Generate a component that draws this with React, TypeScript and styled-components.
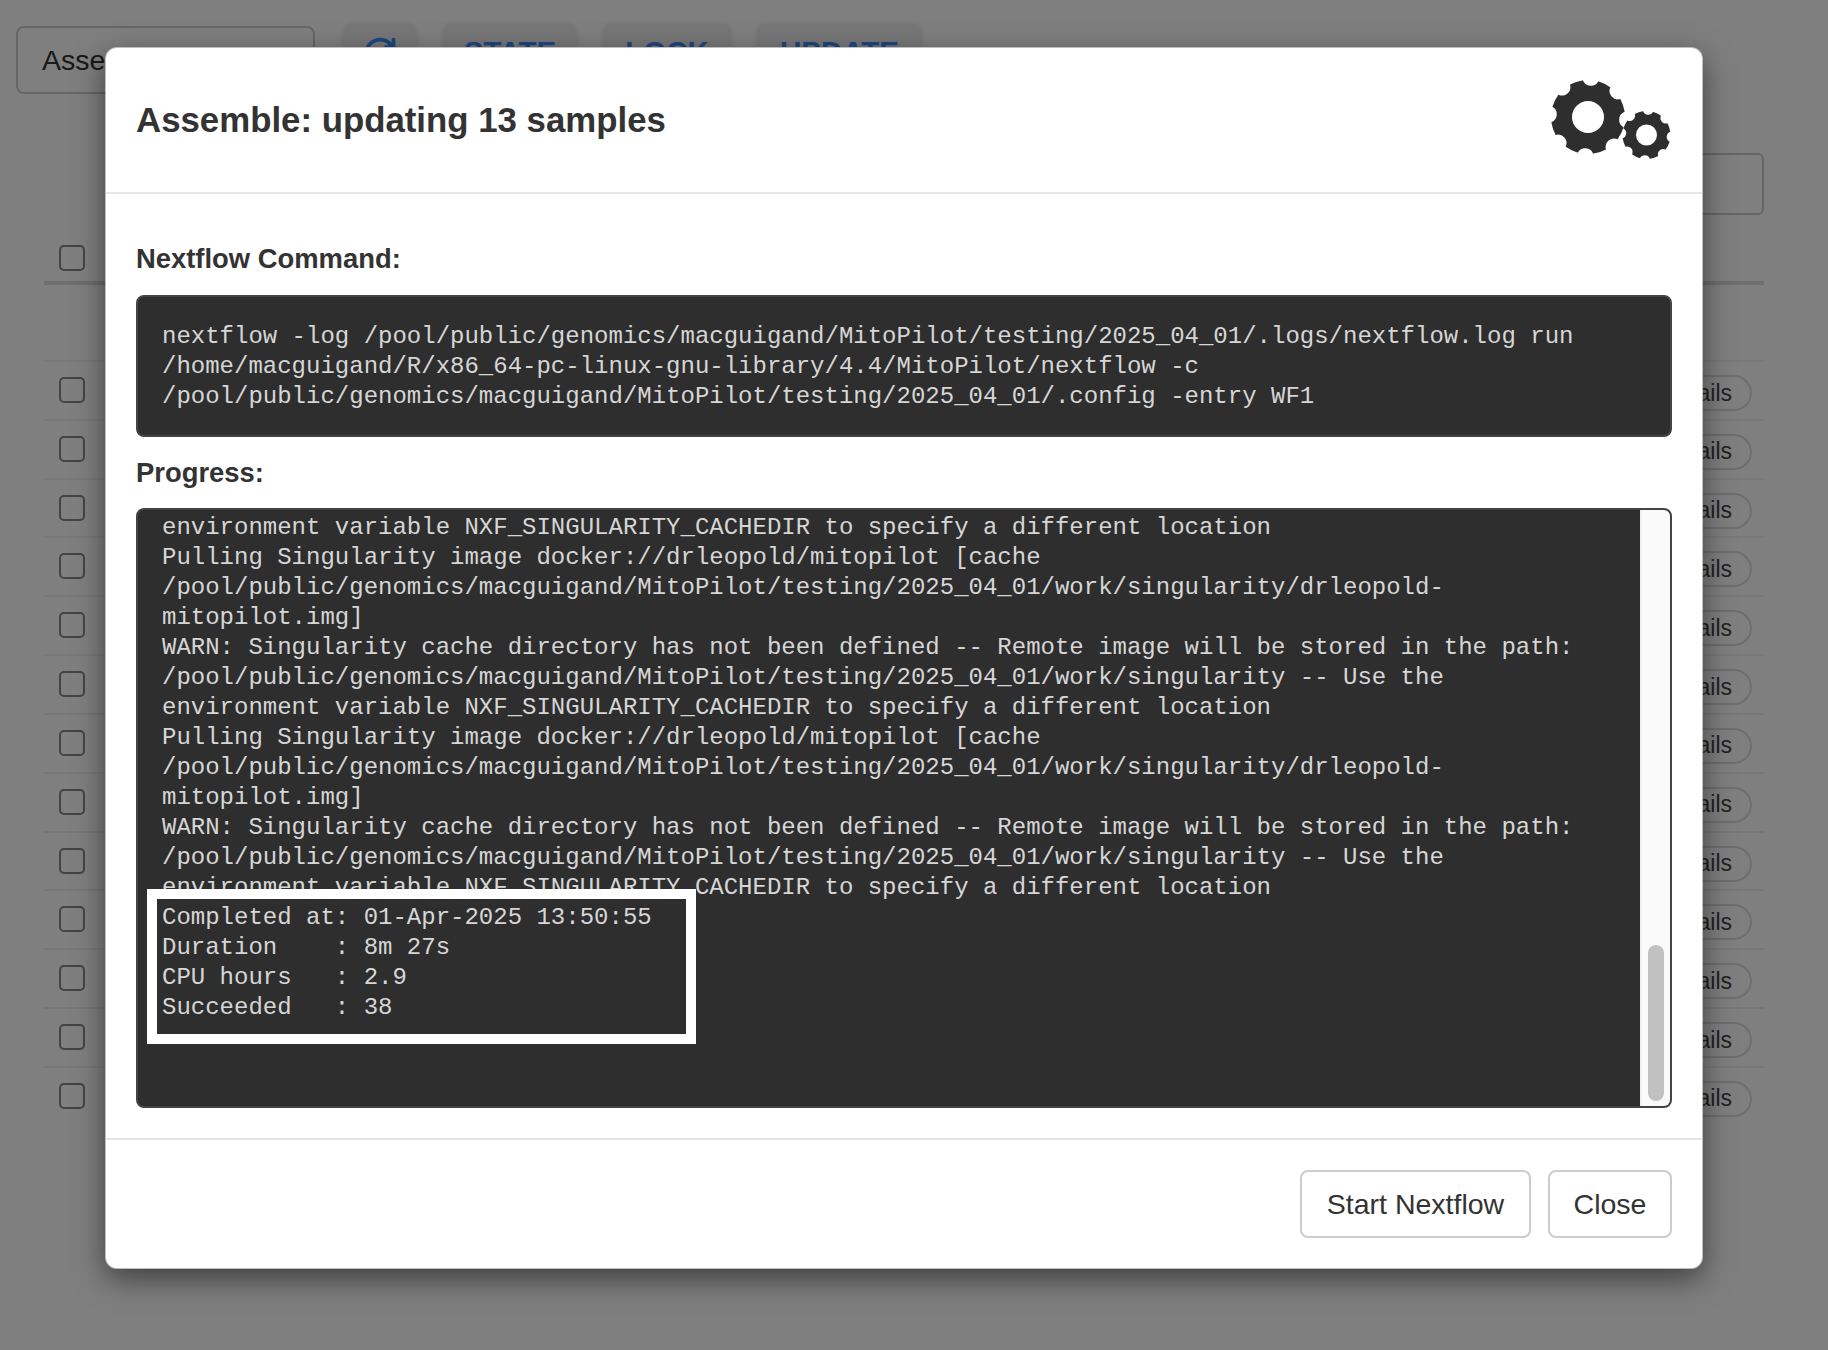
import React from "react";
import styled, { createGlobalStyle } from "styled-components";
import { RotateCw } from "lucide-react";

const Global = createGlobalStyle`
  html, body { margin: 0; padding: 0; background: #fff; }
  body { font-family: "Liberation Sans", Arial, sans-serif; color: #333; }
  #root { width: 1828px; height: 1350px; overflow: hidden; }
`;

const Page = styled.div`
  position: relative;
  width: 1828px;
  height: 1350px;
  overflow: hidden;
`;

const Toolbar = styled.div`
  display: flex;
  align-items: flex-start;
  padding: 24px 0 0 16px;
  height: 70px;
  box-sizing: border-box;
`;

const Select = styled.div`
  width: 299px;
  height: 68px;
  margin-top: 2px;
  padding-left: 24px;
  box-sizing: border-box;
  display: flex;
  align-items: center;
  border: 2px solid #ccc;
  border-radius: 8px;
  font-size: 28.5px;
  color: #333;
`;

const ToolButton = styled.div<{ $width: number; $gap: number }>`
  width: ${(p) => p.$width}px;
  height: 68px;
  margin-left: ${(p) => p.$gap}px;
  display: flex;
  justify-content: center;
  align-items: flex-start;
  padding-top: 11px;
  box-sizing: border-box;
  background: #eee;
  border-radius: 6px;
  box-shadow: 0 1px 6px rgba(0, 0, 0, 0.12);
  color: #3c8cff;
  font-size: 29.5px;
  font-weight: 700;
`;

const SearchRow = styled.div`
  display: flex;
  justify-content: flex-end;
  padding: 83px 64px 0 0;
`;

const Search = styled.div`
  width: 400px;
  height: 62px;
  box-sizing: border-box;
  border: 2px solid #ccc;
  border-radius: 6px;
`;

const Table = styled.div`
  width: 1720px;
  margin: 0 0 0 44px;
`;

const HeaderRow = styled.div`
  display: flex;
  box-sizing: border-box;
  height: 70px;
  padding: 28px 0 0 15px;
  border-bottom: 4px solid #ddd;
  margin-bottom: 75px;
`;

const Row = styled.div`
  height: 58.83px;
  box-sizing: border-box;
  display: flex;
  justify-content: space-between;
  padding: 13px 12px 0 15px;
  border-top: 2px solid #eee;
`;

const Check = styled.div`
  width: 26px;
  height: 26px;
  margin-top: 2px;
  box-sizing: border-box;
  border: 2px solid #888;
  border-radius: 5px;
`;

const Pill = styled.div`
  height: 36px;
  box-sizing: border-box;
  padding: 0 18px;
  display: flex;
  align-items: center;
  border: 2px solid #ddd;
  border-radius: 18px;
  font-size: 23px;
  color: #444;
`;

const Backdrop = styled.div`
  position: absolute;
  inset: 0;
  background: rgba(0, 0, 0, 0.5);
`;

const Modal = styled.div`
  position: absolute;
  left: 105px;
  top: 47px;
  width: 1598px;
  height: 1222px;
  box-sizing: border-box;
  display: flex;
  flex-direction: column;
  background: #fff;
  border: 1px solid rgba(0, 0, 0, 0.25);
  border-radius: 12px;
  box-shadow: 0 10px 30px rgba(0, 0, 0, 0.5);
`;

const ModalHeader = styled.div`
  height: 146px;
  box-sizing: border-box;
  display: flex;
  align-items: center;
  justify-content: space-between;
  padding: 0 30px;
  border-bottom: 2px solid #e5e5e5;
`;

const Title = styled.h4`
  margin: 0;
  font-size: 34.8px;
  font-weight: 700;
  color: #333;
`;

const ModalBody = styled.div`
  flex: 1;
  padding: 47px 30px 0;
`;

const Label = styled.div<{ $top?: number }>`
  height: 36px;
  line-height: 36px;
  margin-top: ${(p) => p.$top ?? 0}px;
  margin-bottom: ${(p) => (p.$top ? 17 : 18)}px;
  font-size: 27.4px;
  font-weight: 700;
  color: #333;
`;

const Console = styled.pre`
  margin: 0;
  box-sizing: border-box;
  height: 142px;
  padding: 25px 24px 19px;
  background: #2e2e2e;
  border: 2px solid #444;
  border-radius: 8px;
  color: #d6d6d6;
  font: 24px/30px "Liberation Mono", "Courier New", monospace;
`;

const LogBox = styled.div`
  position: relative;
  display: flex;
  height: 600px;
  box-sizing: border-box;
  background: #2e2e2e;
  border: 2px solid #444;
  border-radius: 8px;
  overflow: hidden;
`;

const LogText = styled.pre`
  flex: 1;
  margin: 0;
  padding: 3px 24px 0;
  overflow: hidden;
  color: #d6d6d6;
  font: 24px/30px "Liberation Mono", "Courier New", monospace;
`;

const Highlight = styled.div`
  position: absolute;
  left: 9px;
  top: 379px;
  width: 549px;
  height: 155px;
  box-sizing: border-box;
  border: 10px solid #fff;
`;

const ScrollTrack = styled.div`
  width: 30px;
  box-sizing: border-box;
  display: flex;
  flex-direction: column;
  justify-content: flex-end;
  align-items: center;
  padding-bottom: 5px;
  background: #fafafa;
  border-left: 2px solid #f0f0f0;
`;

const ScrollThumb = styled.div`
  width: 16px;
  height: 156px;
  background: #c1c1c1;
  border-radius: 8px;
`;

const ModalFooter = styled.div`
  height: 130px;
  box-sizing: border-box;
  display: flex;
  justify-content: flex-end;
  gap: 17px;
  padding: 30px 30px 0 0;
  border-top: 2px solid #e5e5e5;
`;

const Button = styled.div<{ $width: number }>`
  width: ${(p) => p.$width}px;
  height: 68px;
  box-sizing: border-box;
  display: flex;
  align-items: center;
  justify-content: center;
  background: #fff;
  border: 2px solid #ccc;
  border-radius: 8px;
  font-size: 28.5px;
  color: #333;
`;

function gearPath(cx: number, cy: number, R: number, root: number, hole: number, rot: number) {
  const half = 9.5;
  const pt = (r: number, deg: number) => {
    const a = (deg * Math.PI) / 180;
    return `${(cx + r * Math.cos(a)).toFixed(2)} ${(cy + r * Math.sin(a)).toFixed(2)}`;
  };
  const chordHalf = R * Math.sin(((22.5 - half) * Math.PI) / 180);
  const sag = R * Math.cos(((22.5 - half) * Math.PI) / 180) - root;
  const notch = (chordHalf * chordHalf + sag * sag) / (2 * sag);
  let d = "";
  for (let i = 0; i < 8; i++) {
    const t = rot + 22.5 + i * 45;
    d += `${i === 0 ? "M" : "L"}${pt(R - 0.5, t - half)} `;
    d += `A${R} ${R} 0 0 1 ${pt(R - 0.5, t + half)} `;
    d += `L${pt(R - 0.5, t + half + 1)} `;
    d += `A${notch.toFixed(2)} ${notch.toFixed(2)} 0 0 0 ${pt(R - 0.5, t + 45 - half - 1)} `;
  }
  d += `Z M${cx + hole} ${cy} A${hole} ${hole} 0 1 0 ${cx - hole} ${cy} A${hole} ${hole} 0 1 0 ${cx + hole} ${cy} Z`;
  return d;
}

const Gears = () => (
  <svg width="124" height="84" viewBox="0 0 124 84" aria-hidden="true">
    <path fill="#2e2e2e" fillRule="evenodd" d={gearPath(40, 39, 37.5, 29, 16, 4)} />
    <path fill="#2e2e2e" fillRule="evenodd" d={gearPath(98.5, 57, 24.5, 18.5, 10.5, 4)} />
  </svg>
);

const command = `nextflow -log /pool/public/genomics/macguigand/MitoPilot/testing/2025_04_01/.logs/nextflow.log run
/home/macguigand/R/x86_64-pc-linux-gnu-library/4.4/MitoPilot/nextflow -c
/pool/public/genomics/macguigand/MitoPilot/testing/2025_04_01/.config -entry WF1`;

const env = "environment variable NXF_SINGULARITY_CACHEDIR to specify a different location";
const pull = `Pulling Singularity image docker://drleopold/mitopilot [cache
/pool/public/genomics/macguigand/MitoPilot/testing/2025_04_01/work/singularity/drleopold-
mitopilot.img]`;
const warn = `WARN: Singularity cache directory has not been defined -- Remote image will be stored in the path:
/pool/public/genomics/macguigand/MitoPilot/testing/2025_04_01/work/singularity -- Use the`;

const log = `${env}
${pull}
${warn}
${env}
${pull}
${warn}
${env}
Completed at: 01-Apr-2025 13:50:55
Duration    : 8m 27s
CPU hours   : 2.9
Succeeded   : 38`;

const rows = Array.from({ length: 13 }, (_, i) => i);

export default function App() {
  return (
    <Page>
      <Global />
      <Toolbar>
        <Select>Assemble</Select>
        <ToolButton $width={72} $gap={29}>
          <RotateCw size={36} strokeWidth={2.5} />
        </ToolButton>
        <ToolButton $width={132} $gap={28}>STATE</ToolButton>
        <ToolButton $width={126} $gap={28}>LOCK</ToolButton>
        <ToolButton $width={163} $gap={28}>UPDATE</ToolButton>
      </Toolbar>
      <SearchRow>
        <Search />
      </SearchRow>
      <Table>
        <HeaderRow>
          <Check />
        </HeaderRow>
        {rows.map((r) => (
          <Row key={r}>
            <Check />
            <Pill>Details</Pill>
          </Row>
        ))}
      </Table>
      <Backdrop />
      <Modal>
        <ModalHeader>
          <Title>Assemble: updating 13 samples</Title>
          <Gears />
        </ModalHeader>
        <ModalBody>
          <Label>Nextflow Command:</Label>
          <Console>{command}</Console>
          <Label $top={18}>Progress:</Label>
          <LogBox>
            <LogText>{log}</LogText>
            <ScrollTrack>
              <ScrollThumb />
            </ScrollTrack>
            <Highlight />
          </LogBox>
        </ModalBody>
        <ModalFooter>
          <Button $width={231}>Start Nextflow</Button>
          <Button $width={124}>Close</Button>
        </ModalFooter>
      </Modal>
    </Page>
  );
}
